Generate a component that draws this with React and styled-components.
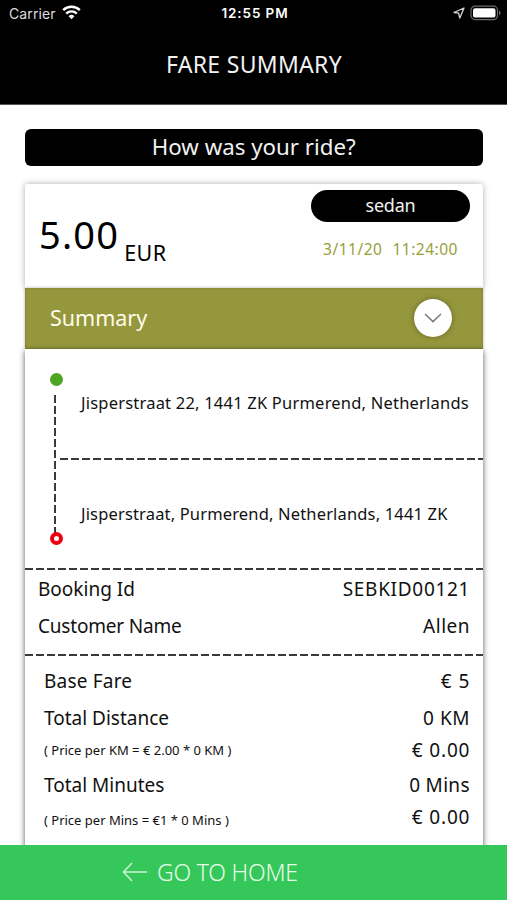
import React from "react"
import styled, { createGlobalStyle } from "styled-components"

const App = () => {
  return (
    <Screen>
      <GlobalStyle />
      <StatusBar>
        <Carrier>
          Carrier
          <WifiIcon />
        </Carrier>
        <Clock>12:55 PM</Clock>
        <Indicators>
          <LocationIcon />
          <BatteryIcon />
        </Indicators>
      </StatusBar>
      <Header>
        <h1>FARE SUMMARY</h1>
      </Header>

      <Main>
        <ReviewButton>How was your ride?</ReviewButton>

        <FareCard>
          <Price>
            <Amount>5.00</Amount>
            <Currency>EUR</Currency>
          </Price>
          <Ride>
            <CarType>sedan</CarType>
            <RideTime>
              <span>3/11/20</span>
              <span>11:24:00</span>
            </RideTime>
          </Ride>
        </FareCard>

        <SummaryBar>
          <h2>Summary</h2>
          <Toggle aria-label="Toggle summary">
            <svg width="18" height="10" viewBox="0 0 18 10" fill="none">
              <path d="M1 1l8 7.6L17 1" stroke="#7c7c7c" strokeWidth="1.5" />
            </svg>
          </Toggle>
        </SummaryBar>

        <Details>
          <Route>
            <Rail>
              <Pickup />
              <RailLine />
              <Dropoff />
            </Rail>
            <div>
              <Address $spacing={0.21}>
                Jisperstraat 22, 1441 ZK Purmerend, Netherlands
              </Address>
              <Dashes />
              <Address $spacing={0.16}>
                Jisperstraat, Purmerend, Netherlands, 1441 ZK
              </Address>
            </div>
          </Route>
          <Dashes />
          <Booking>
            <Row $height={37}>
              <Text>Booking Id</Text>
              <Text $spacing={0.7}>SEBKID00121</Text>
            </Row>
            <Row $height={38}>
              <Text $spacing={-0.19}>Customer Name</Text>
              <Text $spacing={0.5}>Allen</Text>
            </Row>
          </Booking>
          <Dashes />
          <Fares>
            <Row $height={37}>
              <Text $spacing={0.2}>Base Fare</Text>
              <Text $spacing={1}>€ 5</Text>
            </Row>
            <Row $height={38}>
              <Text>Total Distance</Text>
              <Text $spacing={0.6}>0 KM</Text>
            </Row>
            <Row $height={26}>
              <Note>( Price per KM = € 2.00 * 0 KM )</Note>
              <Text $spacing={0.85}>€ 0.00</Text>
            </Row>
            <Row $height={44}>
              <Text>Total Minutes</Text>
              <Text $spacing={0.3}>0 Mins</Text>
            </Row>
            <Row $height={20}>
              <Note $drop>( Price per Mins = €1 * 0 Mins )</Note>
              <Text $spacing={0.85}>€ 0.00</Text>
            </Row>
          </Fares>
        </Details>
      </Main>

      <HomeButton>
        <svg width="26" height="20" viewBox="0 0 26 20" fill="none">
          <path
            d="M10 1L1.5 10l8.5 9M1.5 10H25"
            stroke="#c9f5d2"
            strokeWidth="1.5"
          />
        </svg>
        GO TO HOME
      </HomeButton>
    </Screen>
  )
}

const WifiIcon = () => (
  <svg width="19" height="15" viewBox="0 0 19 15" fill="none" stroke="#fff">
    <path d="M1.2 5.2a12 12 0 0 1 16.6 0" strokeWidth="2.5" />
    <path d="M4.2 8.6a7.6 7.6 0 0 1 10.6 0" strokeWidth="2.3" />
    <path
      d="M9.5 14.2L6.6 11.2a4.2 4.2 0 0 1 5.8 0z"
      fill="#fff"
      stroke="none"
    />
  </svg>
)

const LocationIcon = () => (
  <svg width="12" height="12" viewBox="0 0 12 12" fill="none">
    <path
      d="M11 1L1 5.5l4.6.7L6.8 11z"
      stroke="#d5d5d5"
      strokeWidth="1.3"
      strokeLinejoin="round"
    />
  </svg>
)

const BatteryIcon = () => (
  <svg width="31" height="16" viewBox="0 0 31 16">
    <rect
      x="1"
      y="1.2"
      width="26.5"
      height="13.4"
      rx="4"
      fill="none"
      stroke="#6b6b6b"
      strokeWidth="1.2"
    />
    <rect x="3" y="3.2" width="22.5" height="9.4" rx="2.2" fill="#fff" />
    <path d="M29 5.6c2 .8 2 3.9 0 4.7z" fill="#6b6b6b" />
  </svg>
)

const GlobalStyle = createGlobalStyle`
  * {
    box-sizing: border-box;
  }
  body {
    margin: 0;
    background: #fff;
    color: #111;
    font-family: "Noto Sans", sans-serif;
  }
  h1,
  h2 {
    margin: 0;
    font-weight: 400;
  }
  button {
    border: 0;
    padding: 0;
    font-family: inherit;
  }
  svg {
    display: block;
    flex: none;
  }
`

const Screen = styled.div`
  display: flex;
  flex-direction: column;
  height: 900px;
  overflow: hidden;
  white-space: nowrap;
`

const StatusBar = styled.div`
  display: grid;
  grid-template-columns: 1fr auto 1fr;
  align-items: center;
  height: 28px;
  flex: none;
  padding: 0 6px 2px 9px;
  background: #000;
  color: #fff;
  font-family: Inter, sans-serif;
`

const Carrier = styled.div`
  display: flex;
  align-items: center;
  gap: 6px;
  color: #ddd;
  font-size: 14px;
  letter-spacing: 0.1px;

  svg {
    margin-top: -2px;
  }
`

const Clock = styled.div`
  font-weight: 600;
  font-size: 13.5px;
  letter-spacing: 0.9px;
`

const Indicators = styled.div`
  display: flex;
  justify-content: flex-end;
  align-items: center;
  gap: 5px;
`

const Header = styled.header`
  display: flex;
  justify-content: center;
  flex: none;
  height: 77px;
  padding: 16px 0 0 1px;
  background: #000;
  border-bottom: 1px solid #555;
  color: #f2f2f2;

  h1 {
    font-size: 23px;
    line-height: 40px;
    letter-spacing: 0.3px;
  }
`

const Main = styled.main`
  display: flex;
  flex-direction: column;
  flex: 1;
  min-height: 0;
  padding: 24px 24.5px 0 25px;
  overflow: hidden;
`

const ReviewButton = styled.button`
  flex: none;
  height: 37px;
  margin-bottom: 18px;
  padding-bottom: 2px;
  border-radius: 6px;
  background: #000;
  color: #f2f2f2;
  font-size: 22.3px;
  line-height: 35px;
`

const FareCard = styled.section`
  display: flex;
  justify-content: space-between;
  flex: none;
  height: 104px;
  padding: 6px 12.5px 0 14px;
  border-radius: 3px 3px 0 0;
  box-shadow: 0 0 6px rgba(0, 0, 0, 0.32);
  background: #fff;
`

const Price = styled.div`
  display: flex;
  gap: 5px;
  color: #000;
`

const Amount = styled.span`
  padding-top: 19px;
  font-size: 38px;
  line-height: 50px;
  letter-spacing: 1.2px;
`

const Currency = styled.span`
  padding-top: 48px;
  font-size: 21.5px;
  line-height: 30px;
  letter-spacing: 0.4px;
`

const Ride = styled.div`
  display: flex;
  flex-direction: column;
  align-items: center;
  gap: 17px;
  width: 159px;
`

const CarType = styled.div`
  width: 100%;
  height: 32px;
  border-radius: 16px;
  background: #000;
  color: #f2f2f2;
  font-size: 18px;
  line-height: 30px;
  letter-spacing: -0.25px;
  text-align: center;
`

const RideTime = styled.div`
  display: flex;
  gap: 10px;
  color: #95a03a;
  font-size: 15.5px;
  line-height: 20px;
  letter-spacing: 0.5px;
`

const SummaryBar = styled.div`
  display: flex;
  justify-content: space-between;
  align-items: center;
  flex: none;
  height: 61px;
  padding: 0 31px 1px 25px;
  background: #95973d;
  box-shadow: 0 0 3px rgba(0, 0, 0, 0.3), inset 0 0 3px rgba(90, 85, 20, 0.4);
  color: #fffdea;

  h2 {
    padding-bottom: 1px;
    font-size: 21.5px;
    line-height: 30px;
  }
`

const Toggle = styled.button`
  display: flex;
  justify-content: center;
  align-items: center;
  width: 38px;
  height: 38px;
  border-radius: 50%;
  background: #fff;
  box-shadow: 0 0 5px rgba(50, 50, 0, 0.5);
`

const Details = styled.section`
  flex: none;
  height: 520px;
  background: #fff;
  box-shadow: 0 2px 6px rgba(0, 0, 0, 0.65);
`

const Route = styled.div`
  display: grid;
  grid-template-columns: 34.5px 1fr;
  height: 219px;
`

const Rail = styled.div`
  display: flex;
  flex-direction: column;
  align-items: flex-end;
  padding-top: 24px;
`

const Pickup = styled.span`
  width: 13px;
  height: 13px;
  margin-right: -3px;
  border-radius: 50%;
  background: #4ea524;
`

const RailLine = styled.span`
  width: 2px;
  height: 139px;
  margin: 9px 4px 0 0;
  background: repeating-linear-gradient(#3a3a3a 0 8px, transparent 8px 11px);
`

const Dropoff = styled.span`
  width: 13px;
  height: 13px;
  margin: -2px -3px 0 0;
  border: 4px solid #ec0010;
  border-radius: 50%;
  background: #fff;
`

const Address = styled.p`
  margin: 0;
  padding-left: 21.5px;
  font-size: 16.5px;
  line-height: 108.5px;
  letter-spacing: ${props => props.$spacing}px;
`

const Dashes = styled.div`
  height: 2px;
  background: repeating-linear-gradient(
    90deg,
    #3a3a3a 0 8px,
    transparent 8px 11px
  );
`

const Booking = styled.div`
  height: 84px;
  padding: 0 13px;
`

const Fares = styled.div`
  padding: 6px 13px 0 19px;
`

const Row = styled.div`
  display: flex;
  justify-content: space-between;
  align-items: center;
  height: ${props => props.$height}px;
`

const Text = styled.span`
  font-size: 19px;
  line-height: 26px;
  letter-spacing: ${props => props.$spacing || 0}px;
  margin-right: ${props => -(props.$spacing || 0)}px;
`

const Note = styled.span`
  font-size: 13px;
  line-height: 20px;
  padding-top: ${props => (props.$drop ? 6 : 0)}px;
`

const HomeButton = styled.button`
  display: flex;
  align-items: center;
  flex: none;
  gap: 9px;
  height: 55px;
  padding: 0 0 1px 122px;
  background: #35c759;
  color: #e6fdea;
  font-size: 23px;
  font-weight: 300;
  letter-spacing: -0.2px;
`

export default App
